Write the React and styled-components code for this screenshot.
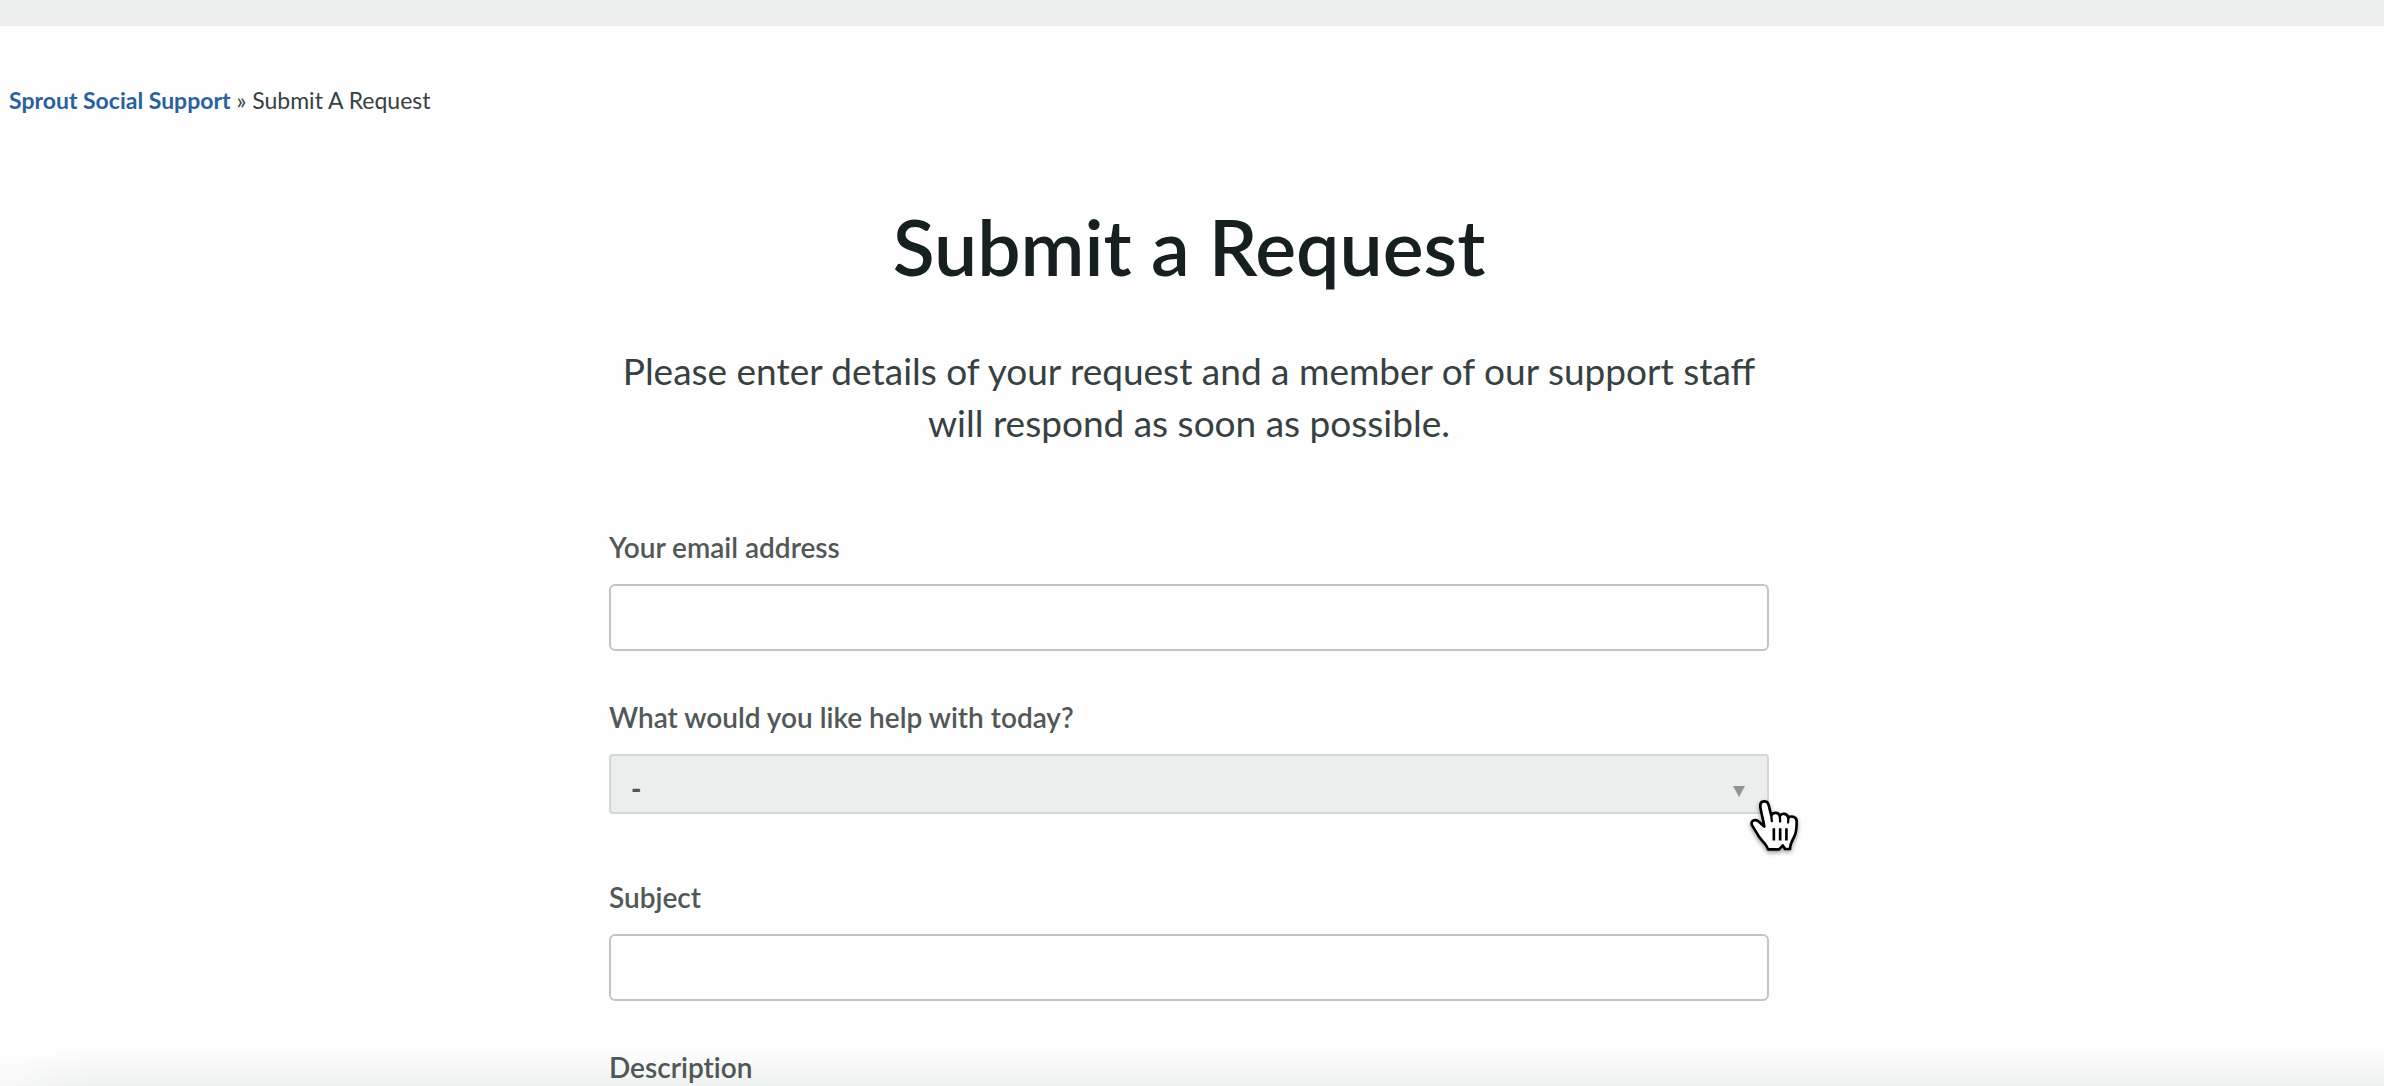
import React from 'react';
import styled, { createGlobalStyle } from 'styled-components';

const GlobalStyle = createGlobalStyle`
  *,
  *::before,
  *::after {
    box-sizing: border-box;
  }

  body {
    margin: 0;
    background-color: #fefefe;
    color: #364141;
    font-family: Lato, 'Liberation Sans', sans-serif;
  }
`;

const StyledPage = styled.div`
  position: relative;
  height: 100vh;
  overflow: hidden;
`;

const StyledTopBar = styled.header`
  height: 26px;
  background-color: #eceeed;
`;

const StyledBreadcrumbs = styled.nav`
  padding: 60px 9px 0;
  font-size: 23px;
  line-height: 28px;
`;

const StyledLink = styled.a`
  color: #2a619d;
  font-weight: 700;
  text-decoration: none;

  &:hover {
    text-decoration: underline;
  }
`;

const StyledMain = styled.main`
  width: 100%;
  max-width: 1166px;
  margin: 0 auto;
  padding-right: 6px;
`;

const StyledHeading = styled.h1`
  margin: 87px 0 54px;
  color: #162020;
  font-size: 77px;
  font-weight: 600;
  line-height: 90px;
  text-align: center;
`;

const StyledIntro = styled.p`
  margin: 0 0 82px;
  font-size: 37px;
  line-height: 52px;
  text-align: center;
`;

const StyledField = styled.div`
  display: flex;
  flex-direction: column;
  gap: 21px;
  margin-bottom: ${({ $spacing }) => $spacing || '50px'};
`;

const StyledLabel = styled.label`
  color: #515858;
  font-size: 28px;
  font-weight: 600;
  font-variant-ligatures: none;
  line-height: 32px;
`;

const StyledInput = styled.input`
  width: 100%;
  height: 67px;
  padding: 0 20px;
  border: 2px solid #c3c5c5;
  border-radius: 6px;
  background-color: #fefefe;
  font: inherit;
  font-size: 28px;
`;

const StyledTextarea = styled(StyledInput).attrs({ as: 'textarea' })`
  height: 240px;
  padding: 16px 20px;
`;

const StyledSelectWrapper = styled.div`
  position: relative;
`;

const StyledSelect = styled.select`
  appearance: none;
  display: block;
  width: 100%;
  height: 60px;
  padding: 8px 20px 0;
  border: 2px solid #d3d7d6;
  border-radius: 4px;
  background-color: #eceeed;
  color: #515858;
  font: inherit;
  font-size: 28px;
  font-weight: 900;
  cursor: pointer;
`;

const StyledArrow = styled.svg`
  position: absolute;
  top: 31px;
  right: 24px;
  width: 12px;
  height: 12px;
  fill: #8f9494;
  pointer-events: none;
`;

const StyledPointer = styled.svg`
  position: absolute;
  top: 43px;
  right: -32px;
  width: 53px;
  height: 59px;
  overflow: visible;
  filter: drop-shadow(0 2px 2px rgba(0, 0, 0, 0.4));
  pointer-events: none;
`;

const StyledBottomFade = styled.div`
  position: absolute;
  right: 0;
  bottom: 0;
  left: 0;
  height: 36px;
  background: linear-gradient(rgba(40, 60, 55, 0), rgba(40, 60, 55, 0.07));
  mask-image: linear-gradient(to right, rgba(0, 0, 0, 0.4), #000 90px);
  pointer-events: none;
`;

const PointerHand = () => (
  <StyledPointer viewBox="264 170 160 176" aria-hidden="true">
    <path
      d="M324 327 C321 312 308 304 298 290 C291 278 283 266 276 254 C271 241 284 235 295 242 L313 258 C311 238 302 214 301 195 C301 179 322 178 326 192 L334 224 C340 214 356 214 360 226 C367 216 382 218 386 231 C397 224 411 230 411 243 C411 263 410 279 402 292 C395 304 391 313 391 326 L376 326 L369 315 L358 327 Z"
      fill="#fff"
      stroke="#000"
      strokeWidth="8"
      strokeLinejoin="round"
    />
    <path
      d="M334 224 L336 242 M360 226 L361 243 M386 231 L385 246"
      fill="none"
      stroke="#000"
      strokeWidth="7"
      strokeLinecap="round"
    />
    <path d="M342 263 V300 M361 263 V300 M380 263 V300" stroke="#000" strokeWidth="8" />
  </StyledPointer>
);

const App = () => (
  <>
    <GlobalStyle />
    <StyledPage>
      <StyledTopBar />
      <StyledBreadcrumbs>
        <StyledLink href="#support">Sprout Social Support</StyledLink> » Submit A Request
      </StyledBreadcrumbs>
      <StyledMain>
        <StyledHeading>Submit a Request</StyledHeading>
        <StyledIntro>
          Please enter details of your request and a member of our support staff will respond as
          soon as possible.
        </StyledIntro>
        <form>
          <StyledField>
            <StyledLabel htmlFor="email">Your email address</StyledLabel>
            <StyledInput id="email" type="email" />
          </StyledField>
          <StyledField $spacing="67px">
            <StyledLabel htmlFor="topic">What would you like help with today?</StyledLabel>
            <StyledSelectWrapper>
              <StyledSelect id="topic">
                <option>-</option>
              </StyledSelect>
              <StyledArrow viewBox="0 0 12 12" aria-hidden="true">
                <path d="M0 1h12L6 12z" />
              </StyledArrow>
              <PointerHand />
            </StyledSelectWrapper>
          </StyledField>
          <StyledField>
            <StyledLabel htmlFor="subject">Subject</StyledLabel>
            <StyledInput id="subject" type="text" />
          </StyledField>
          <StyledField>
            <StyledLabel htmlFor="description">Description</StyledLabel>
            <StyledTextarea id="description" />
          </StyledField>
        </form>
      </StyledMain>
      <StyledBottomFade />
    </StyledPage>
  </>
);

export default App;
